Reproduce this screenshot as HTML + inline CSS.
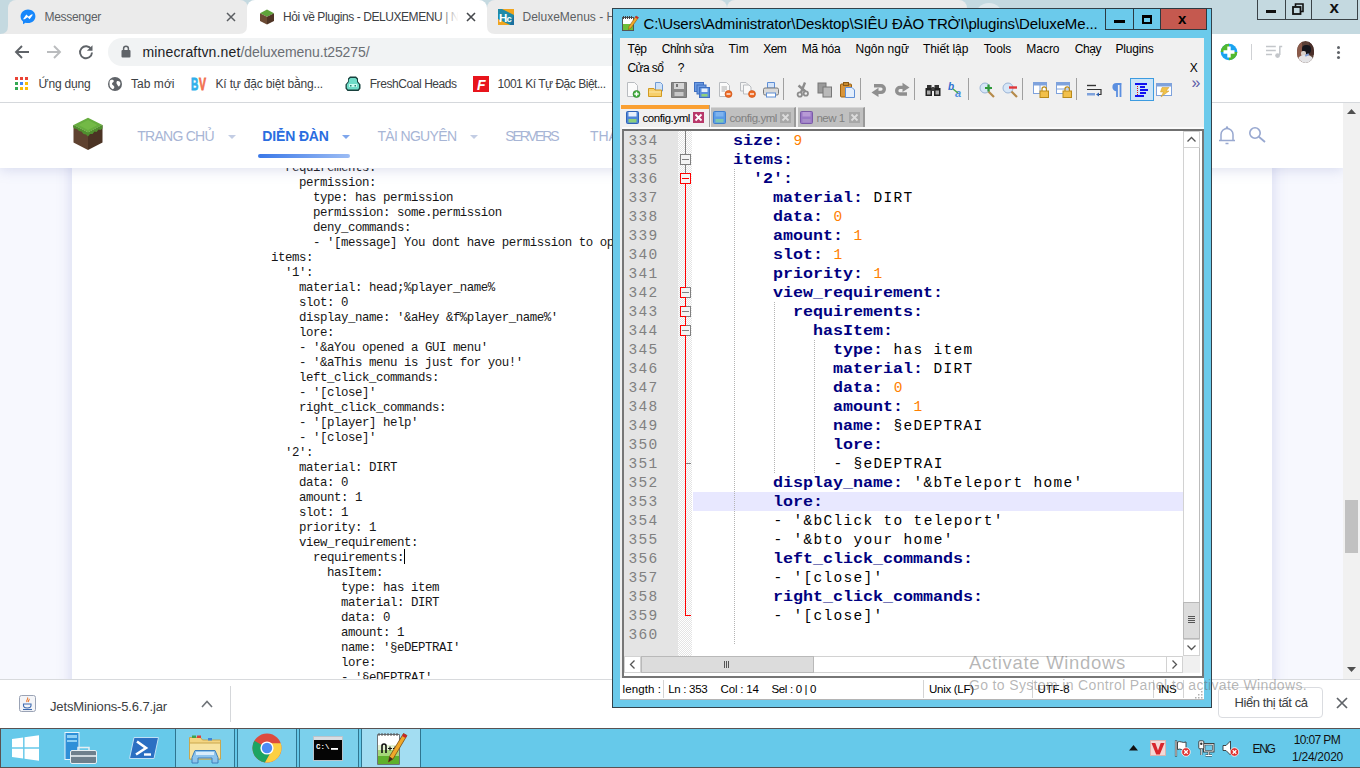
<!DOCTYPE html>
<html lang="vi"><head><meta charset="utf-8"><title>Hỏi về Plugins - DELUXEMENU</title>
<style>
*{box-sizing:border-box;margin:0;padding:0}
html,body{width:1360px;height:768px;overflow:hidden;background:#fff;font-family:"Liberation Sans",sans-serif}
#root{position:relative;width:1360px;height:768px;overflow:hidden}
#root div,#root span,#root svg,#root pre,#root i{position:absolute;display:block}
.t{white-space:pre}
/* chrome */
#tabstrip{left:0;top:0;width:1360px;height:34px;background:#c4d9e0}
.tab{top:0;height:34px;border-radius:8px 8px 0 0;background:#ebebeb}
#toolbar{left:0;top:34px;width:1360px;height:36px;background:#fff}
#bookmarks{left:0;top:70px;width:1360px;height:32px;background:#fff}
#bmline{left:0;top:102px;width:1360px;height:1px;background:#d5d8dc}
/* page */
#page{left:0;top:103px;width:1343px;height:577px;background:#f7f8fe;overflow:hidden}
#card{left:72px;top:0;width:1200px;height:600px;background:#fff;box-shadow:0 0 14px rgba(120,130,200,.28)}
#nav{left:0;top:0;width:1343px;height:65px;background:#fff;box-shadow:0 2px 12px rgba(120,130,190,.25)}
#code{left:257px;top:57.5px;font-family:"Liberation Mono",monospace;font-size:12.4px;letter-spacing:-0.44px;line-height:15px;color:#161616;white-space:pre}
#vscroll{left:1343px;top:103px;width:17px;height:577px;background:#f1f1f1}
/* download bar */
#dl{left:0;top:679px;width:1360px;height:49px;background:#fff;border-top:1px solid #d8dadd}
/* taskbar */
#taskbar{left:0;top:728px;width:1360px;height:40px;background:#66c9ea;box-shadow:inset 0 1px 0 #5a5252,inset 1px 0 0 #5a5252,inset 0 -1px 0 #5a5252}
.tb{top:1px;height:38px;background:#7bd0ec;border-left:1px solid #2f7590;border-right:1px solid #2f7590}
/* npp */
#npp{left:612px;top:8px;width:600px;height:700px;background:#6bcaeb;box-shadow:inset 0 0 0 1px #33424b}
#cl{left:8px;top:30px;width:584px;height:662px;background:#f0f0f0}
#tbar{left:0;top:44px;width:584px;height:16px}
#root svg.ic{top:0;width:16px;height:16px}
#root svg.fl{width:13px;height:13px}
#root i.sep{top:-4px;width:1px;height:22px;background:#a0a0a0}
#edf{left:2px;top:91px;width:582px;height:549px;background:#fff;border:2px solid #767676;border-top-color:#707070;box-shadow:0 -2px 0 #fbfbfb}
#ed{left:12px;top:123px;width:576px;height:542px;overflow:hidden;background:#fff}
#lnm{left:0;top:0;width:54px;height:525px;background:#e4e4e4}
#fdm{left:54px;top:0;width:14px;height:525px;background:#f2f2f2 conic-gradient(#fff 25%,#e4e4e4 0 50%,#fff 0 75%,#e4e4e4 0) 0 0/2px 2px}
#cur{left:69px;top:361px;width:490px;height:19px;background:#e8e8ff}
#lnum,#src{top:1px;font-family:"Liberation Mono",monospace;font-size:14.5px;letter-spacing:1.3px;line-height:19px;white-space:pre}
#lnum{left:4.6px;color:#808080}
#src{left:69.6px;color:#000}
#src b{color:#000080;font-weight:700;display:inline-block;font-size:16.667px;letter-spacing:0;line-height:12px;transform:scaleY(.86);transform-origin:0 10.5px;margin-left:-.6px;margin-right:.6px}
#src .n{position:static!important;display:inline!important;color:#ff8000}
#root .ig{width:1px;background:repeating-linear-gradient(180deg,#b4b4b4 0 1px,transparent 1px 2px)}
#sb{left:8px;top:670px;width:584px;height:22px;background:#fff;border-bottom:1px solid #b4b4b4}
#root i.ss{top:2px;width:1px;height:18px;background:#d4d4d4}
</style></head><body><div id="root">
<div id="tabstrip">
 <div class="tab" style="left:8px;width:240px"></div>
 <div class="tab" style="left:487px;width:240px"></div>
 <div class="tab" style="left:727px;width:240px"></div>
 <div style="left:975px;top:3px;width:28px;height:28px;border-radius:14px;background:#dfe8ec"></div>
 <div class="tab" style="left:247px;width:240px;background:#fff"></div>
 <!-- tab flares -->
 <svg style="left:0;top:26px" width="500" height="8" viewBox="0 0 500 8"><path d="M0 8 Q8 8 8 0 V8Z" fill="#ebebeb"/><path d="M239 8 H247 V0 Q247 8 239 8Z M495 8 H487 V0 Q487 8 495 8Z" fill="#fff"/></svg>
 <!-- messenger icon -->
 <svg style="left:20px;top:9px" width="16" height="16" viewBox="0 0 16 16"><path d="M8 .5C3.8.5.6 3.5.6 7.4c0 2.1.9 3.900 2.400 5.100v2.700l2.500-1.400c.8.200 1.600.300 2.500.300 4.200 0 7.400-3 7.400-6.900S12.200.5 8 .5z" fill="#1787fb"/><path d="M3 10.200l3.300-4.600 2.200 1.900 2.800-1.900 1.700 0-3.300 4.600-2.200-1.900-2.800 1.900z" fill="#fff"/></svg>
 <span class="t" style="left:44.5px;top:10.84px;font-size:12px;line-height:12px;color:#5c5f63;letter-spacing:-0.319px;">Messenger</span>
 <svg style="left:226px;top:12px" width="10" height="10" viewBox="0 0 10 10"><path d="M1 1L9 9M9 1L1 9" stroke="#5a5d61" stroke-width="1.500" fill="none"/></svg>
 <!-- active tab: grass block favicon -->
 <svg style="left:259px;top:9px" width="16" height="16" viewBox="0 0 16 16"><path d="M8 .6L15 4.200 8 7.800 1 4.200z" fill="#5fa33a"/><path d="M1 4.200L8 7.800V15.600L1 12z" fill="#6b4a33"/><path d="M15 4.200L8 7.800V15.600L15 12z" fill="#4f3525"/></svg>
 <span class="t" style="left:283px;top:10.84px;font-size:12px;line-height:12px;color:#3c4043;letter-spacing:-0.425px;">Hỏi về Plugins - DELUXEMENU | N</span>
 <div style="left:438px;top:6px;width:24px;height:22px;background:linear-gradient(90deg,rgba(255,255,255,0),#fff 85%)"></div>
 <svg style="left:466px;top:12px" width="10" height="10" viewBox="0 0 10 10"><path d="M1 1L9 9M9 1L1 9" stroke="#45484c" stroke-width="1.600" fill="none"/></svg>
 <!-- tab 3 -->
 <svg style="left:498px;top:9px" width="16" height="16" viewBox="0 0 16 16"><rect width="16" height="16" fill="#1e8aa8"/><path d="M4 0H16V6z M0 10V16H12z" fill="#f0a51e"/><path d="M16 6V16H12z" fill="#1b6f9e"/><text x="1" y="12.500" font-family="Liberation Sans,sans-serif" font-weight="700" font-size="11.500" fill="#fff">H</text><text x="8.500" y="13" font-family="Liberation Sans,sans-serif" font-weight="700" font-size="9.500" fill="#fff">c</text></svg>
 <span class="t" style="left:522.5px;top:10.84px;font-size:12px;line-height:12px;color:#5c5f63;">DeluxeMenus - H</span>
 <!-- window controls -->
 <div style="left:1257px;top:-1px;width:101px;height:21px;border:1px solid #3b4348;background:#c4d9e0"></div>
 <div style="left:1285px;top:0;width:1px;height:19px;background:#3b4348"></div>
 <div style="left:1311px;top:0;width:1px;height:19px;background:#3b4348"></div>
 <div style="left:1266px;top:10px;width:10px;height:3px;background:#111"></div>
 <svg style="left:1292px;top:3px" width="12" height="12" viewBox="0 0 12 12"><path d="M3.500 3.500V1H11V8.500H8.500" fill="none" stroke="#111" stroke-width="1.600"/><rect x="1" y="4" width="7.500" height="7" fill="none" stroke="#111" stroke-width="1.800"/></svg>
 <span class="t" style="left:1329.5px;top:-0.89px;font-size:17px;line-height:17px;color:#111;font-weight:700;">x</span>
</div>
<div id="toolbar">
 <svg style="left:14px;top:10px" width="16" height="16" viewBox="0 0 16 16"><path d="M15 8H2.500M8 2L2 8l6 6" fill="none" stroke="#5f6368" stroke-width="1.900"/></svg>
 <svg style="left:46px;top:10px" width="16" height="16" viewBox="0 0 16 16"><path d="M1 8H13.500M8 2l6 6-6 6" fill="none" stroke="#babcbe" stroke-width="1.900"/></svg>
 <svg style="left:78px;top:10px" width="16" height="16" viewBox="0 0 16 16"><path d="M13.200 5.200A6 6 0 1 0 14 8.500" fill="none" stroke="#5f6368" stroke-width="1.900"/><path d="M14.500 1.200V6.800H8.900z" fill="#5f6368"/></svg>
 <div style="left:108px;top:4px;width:1080px;height:28px;border-radius:14px;background:#f1f3f4"></div>
 <svg style="left:121px;top:11px" width="10" height="13" viewBox="0 0 10 13"><rect x=".5" y="5" width="9" height="7.500" rx="1" fill="#5f6368"/><path d="M2.600 5.500V3.600a2.400 2.400 0 0 1 4.800 0V5.500" fill="none" stroke="#5f6368" stroke-width="1.500"/></svg>
 <span class="t" style="left:142.5px;top:10.65px;font-size:14px;line-height:14px;color:#202124;letter-spacing:0.152px;">minecraftvn.net</span><span class="t" style="left:240.5px;top:10.65px;font-size:14px;line-height:14px;color:#6b6f74;letter-spacing:-0.093px;">/deluxemenu.t25275/</span>
 <!-- extension icons -->
 <svg style="left:1220px;top:9px" width="18" height="18" viewBox="0 0 18 18"><circle cx="9" cy="9" r="8.300" fill="#1aa3f0"/><path d="M9 .7A8.300 8.300 0 0 0 .7 9H9z M9 17.300A8.300 8.300 0 0 0 17.300 9H9z" fill="#52b82e"/><path d="M9 3.500V14.500M3.500 9H14.500" stroke="#fff" stroke-width="3.400"/></svg>
 <div style="left:1251px;top:10px;width:1px;height:16px;background:#cfd1d4"></div>
 <svg style="left:1264px;top:10px" width="20" height="16" viewBox="0 0 20 16"><path d="M2 2.600H11.800M2 6.400H11.800M2 10.500H8" stroke="#c3c6ca" stroke-width="1.500"/><path d="M15.800 2.600V11M15.200 2.600H18.200" stroke="#c3c6ca" stroke-width="1.500" fill="none"/><circle cx="13.600" cy="11.600" r="2.400" fill="#c3c6ca"/></svg>
 <div style="left:1297px;top:7px;width:17px;height:22px;border-radius:8.500px/10px;overflow:hidden;background:#5a4036">
  <div style="left:0;top:0;width:5px;height:22px;background:#8a5a4a"></div>
  <div style="left:12px;top:0;width:5px;height:14px;background:#4a2f2a"></div>
  <div style="left:5px;top:4px;width:9px;height:9px;border-radius:4px;background:#14161c"></div>
  <div style="left:4px;top:10px;width:5px;height:5px;border-radius:2px;background:#d9d2cc"></div>
  <div style="left:0;top:14px;width:17px;height:10px;border-radius:7px 7px 0 0;background:#e4e4e6"></div>
  <div style="left:8px;top:13px;width:4px;height:2px;background:#7f9fd6;transform:rotate(-25deg)"></div>
 </div>
 <div style="left:1337px;top:12px;width:3px;height:3px;border-radius:2px;background:#5f6368;box-shadow:0 5px 0 #5f6368,0 10px 0 #5f6368"></div>
</div>
<div id="bookmarks">
 <svg style="left:15px;top:7px" width="13" height="13" viewBox="0 0 13 13"><rect x="0" y="0" width="3" height="3" fill="#ea4335"/><rect x="5" y="0" width="3" height="3" fill="#ea4335"/><rect x="10" y="0" width="3" height="3" fill="#ea4335"/><rect x="0" y="5" width="3" height="3" fill="#34a853"/><rect x="5" y="5" width="3" height="3" fill="#4285f4"/><rect x="10" y="5" width="3" height="3" fill="#fbbc05"/><rect x="0" y="10" width="3" height="3" fill="#34a853"/><rect x="5" y="10" width="3" height="3" fill="#fbbc05"/><rect x="10" y="10" width="3" height="3" fill="#fbbc05"/></svg>
 <span class="t" style="left:38.5px;top:7.84px;font-size:12px;line-height:12px;color:#3c4043;letter-spacing:-0.203px;">Ứng dụng</span>
 <svg style="left:108px;top:7px" width="14" height="14" viewBox="0 0 14 14"><circle cx="7" cy="7" r="7" fill="#5f6368"/><path d="M2.200 3.200C4 2.200 6 2.800 5.800 4.200S3.800 5.500 4 7 6 8.200 6.300 9.800 5.200 12 4.600 12.300C2.600 11.300 1.500 9.300 1.500 7S1.700 4 2.200 3.200z M9.300 4c1.300-.4 2.700.4 3 1.800S12 8.500 11.200 9.300 9.800 8 9 7.200 8.300 4.400 9.300 4z" fill="#fff"/></svg>
 <span class="t" style="left:131px;top:7.84px;font-size:12px;line-height:12px;color:#3c4043;letter-spacing:0.040px;">Tab mới</span>
 <span class="t" style="left:190.500px;top:5.600px;font-size:17px;line-height:17px;font-weight:700;color:#2fb0ea;-webkit-text-stroke:.8px #2fb0ea;transform:scaleX(.6);transform-origin:0 0">B</span><span class="t" style="left:198.500px;top:5.600px;font-size:17px;line-height:17px;font-weight:700;color:#f2704f;-webkit-text-stroke:.8px #f2704f;transform:scaleX(.62);transform-origin:0 0">V</span>
 <span class="t" style="left:215.5px;top:7.84px;font-size:12px;line-height:12px;color:#3c4043;letter-spacing:-0.179px;">Kí tự đặc biệt bằng...</span>
 <svg style="left:345px;top:6px" width="16" height="16" viewBox="0 0 16 16"><path d="M5 .5h6l2 2v3l2.500 3v4l-2 2.500H2.500L.5 12.500v-4L3 5.500v-3z" fill="#17403c"/><path d="M5.500 2h5l1.500 1.500v2.500l2 2.500v3.500L13 13.500H3L1.800 12V8.500l2-2.500V3.500z" fill="#6fdcc8"/><path d="M4 8h8v3H4z" fill="#c9fbf0"/><path d="M5 9h1.500v1.500H5z M9.500 9H11v1.500H9.500z" fill="#2b7f73"/></svg>
 <span class="t" style="left:369.7px;top:7.84px;font-size:12px;line-height:12px;color:#3c4043;letter-spacing:-0.425px;">FreshCoal Heads</span>
 <div style="left:473px;top:6px;width:16px;height:16px;background:#e8141c"></div>
 <span class="t" style="left:477px;top:7.65px;font-size:14px;line-height:14px;color:#fff;font-weight:700;"><i style="position:static;display:inline">F</i></span>
 <span class="t" style="left:497.5px;top:7.84px;font-size:12px;line-height:12px;color:#3c4043;letter-spacing:-0.479px;">1001 Kí Tự Đặc Biệt...</span>
</div>
<div id="bmline"></div>
<div id="page">
 <div id="card"></div>
 <pre id="code">    requirements:
      permission:
        type: has permission
        permission: some.permission
        deny_commands:
        - '[message] You dont have permission to open this menu'
  items:
    '1':
      material: head;%player_name%
      slot: 0
      display_name: '&amp;aHey &amp;f%player_name%'
      lore:
      - '&amp;aYou opened a GUI menu'
      - '&amp;aThis menu is just for you!'
      left_click_commands:
      - '[close]'
      right_click_commands:
      - '[player] help'
      - '[close]'
    '2':
      material: DIRT
      data: 0
      amount: 1
      slot: 1
      priority: 1
      view_requirement:
        requirements:
          hasItem:
            type: has item
            material: DIRT
            data: 0
            amount: 1
            name: '§eDEPTRAI'
            lore:
            - '§eDEPTRAI'
            display_name: '&amp;bTeleport home'</pre>
 <div style="left:404px;top:446px;width:1px;height:15px;background:#000"></div>
 <div id="nav">
  <svg style="left:72px;top:13.500px" width="32" height="34" viewBox="0 0 32 34"><path d="M1.500 8L16 15.500V33L1.500 25.500z" fill="#5f4230"/><path d="M30.500 8L16 15.500V33L30.500 25.500z" fill="#4b3324"/><path d="M1.500 8L16 15.500 30.500 8V11.500l-2 1.500-2-.5-2 2.500-2-.5-2 2.500-2.500 0-2 2.500-2-2-2.500-.5-2-2.500-2.500-.500-2-2-2.500-.5-1.500-1.500z" fill="#4f8f2e"/><path d="M16 .8L30.500 8 16 15.500 1.500 8z" fill="#66ad3e"/><path d="M16 3l9.500 5-9.500 5-9.500-5z" fill="#7cc24d" opacity=".6"/></svg>
  <span class="t" style="left:137.3px;top:25.55px;font-size:14px;line-height:14px;color:#a7b5d5;letter-spacing:-0.748px;">TRANG CHỦ</span>
  <svg style="left:228px;top:32px" width="8" height="4" viewBox="0 0 8 4"><path d="M0 0H8L4 4z" fill="#c3cde4"/></svg>
  <span class="t" style="left:262.3px;top:25.55px;font-size:14px;line-height:14px;color:#2a6de0;font-weight:700;letter-spacing:-0.146px;">DIỄN ĐÀN</span>
  <svg style="left:342px;top:32px" width="8" height="4" viewBox="0 0 8 4"><path d="M0 0H8L4 4z" fill="#7ea6ec"/></svg>
  <div style="left:258px;top:51px;width:92px;height:4px;border-radius:2px;background:linear-gradient(90deg,#3a78e8,#9cbcf4)"></div>
  <span class="t" style="left:377.4px;top:25.55px;font-size:14px;line-height:14px;color:#a7b5d5;letter-spacing:-0.658px;">TÀI NGUYÊN</span>
  <svg style="left:470px;top:32px" width="8" height="4" viewBox="0 0 8 4"><path d="M0 0H8L4 4z" fill="#c3cde4"/></svg>
  <span class="t" style="left:505.3px;top:25.55px;font-size:14px;line-height:14px;color:#a7b5d5;letter-spacing:-2.067px;">SERVERS</span>
  <span class="t" style="left:589.9px;top:25.55px;font-size:14px;line-height:14px;color:#a7b5d5;">THÀNH VIÊN</span>
  <svg style="left:1218px;top:22px" width="18" height="20" viewBox="0 0 18 20"><path d="M3 15V9.500a6 6 0 0 1 12 0V15M1 15.500H17" fill="none" stroke="#98a8d0" stroke-width="1.500"/><circle cx="9" cy="2.500" r="1.200" fill="#98a8d0"/><path d="M7.500 18.500h3" stroke="#98a8d0" stroke-width="1.500"/></svg>
  <svg style="left:1248px;top:23px" width="18" height="18" viewBox="0 0 18 18"><circle cx="7" cy="7" r="5.200" fill="none" stroke="#98a8d0" stroke-width="1.600"/><path d="M10.800 10.800L17 16" stroke="#98a8d0" stroke-width="1.800"/></svg>
 </div>
</div>
<div id="vscroll">
 <svg style="left:4px;top:6px" width="9" height="5" viewBox="0 0 9 5"><path d="M0 5H9L4.500 0z" fill="#505050"/></svg>
 <svg style="left:4px;top:564px" width="9" height="5" viewBox="0 0 9 5"><path d="M0 0H9L4.500 5z" fill="#505050"/></svg>
 <div style="left:2px;top:397px;width:13px;height:53px;background:#c1c1c1"></div>
</div>
<div id="dl">
 <svg style="left:19px;top:15px" width="17" height="17" viewBox="0 0 17 17"><rect x=".5" y=".5" width="16" height="16" rx="2" fill="#f4f5f8" stroke="#9aa3b5"/><path d="M8.500 2.500c1.500 1.500-2 2.500-.5 4.500M10 4c1 1-1.500 1.800-.5 3" fill="none" stroke="#e8762c" stroke-width="1.100"/><path d="M4.500 9h7.500v1.500c0 1.500-1.500 2.500-3.700 2.500S4.500 12 4.500 10.500z" fill="none" stroke="#3d6ab0" stroke-width="1.100"/><path d="M4 14.500h9" stroke="#3d6ab0" stroke-width="1.100"/></svg>
 <span class="t" style="left:50px;top:19.70px;font-size:13px;line-height:13px;color:#3c4043;letter-spacing:-0.141px;">JetsMinions-5.6.7.jar</span>
 <svg style="left:201px;top:20px" width="12" height="8" viewBox="0 0 12 8"><path d="M1 7L6 1.500 11 7" fill="none" stroke="#6f7378" stroke-width="1.600"/></svg>
 <div style="left:230px;top:6px;width:1px;height:36px;background:#d5d7da"></div>
 <div style="left:1218px;top:7px;width:105px;height:31px;border:1px solid #dadce0;border-radius:4px;background:#fff"></div>
 <span class="t" style="left:1234.6px;top:16.30px;font-size:13px;line-height:13px;color:#3c4043;letter-spacing:-0.433px;">Hiển thị tất cả</span>
 <svg style="left:1336px;top:17px" width="12" height="12" viewBox="0 0 12 12"><path d="M1 1L11 11M11 1L1 11" stroke="#5f6368" stroke-width="1.700" fill="none"/></svg>
</div>
<div id="taskbar">
 <!-- start -->
 <svg style="left:11.500px;top:6.500px" width="27" height="26" viewBox="0 0 28 28" preserveAspectRatio="none"><path d="M0 4.200L11.500 2.600V13.300H0z M13 2.400L28 .3V13.300H13z M0 14.700H11.500V25.400L0 23.800z M13 14.700H28V27.700L13 25.600z" fill="#fff"/></svg>
 <!-- server manager -->
 <svg style="left:64px;top:4px" width="34" height="32" viewBox="0 0 34 32"><rect x="1" y=".5" width="14" height="27" fill="#2f8fd8" stroke="#e8f4fb" stroke-width="1"/><rect x="3" y="3" width="10" height="3" fill="#8fd0f5"/><rect x="3" y="8" width="10" height="2" fill="#8fd0f5"/><rect x="6.500" y="18.500" width="26" height="13" rx="1.500" fill="#6e7f8c" stroke="#e6eef2" stroke-width="1"/><path d="M14 18.500v-3h11v3" fill="none" stroke="#e6eef2" stroke-width="1.500"/><rect x="7" y="23" width="25" height="2" fill="#cfd8de"/></svg>
 <!-- powershell -->
 <svg style="left:129px;top:9px" width="30" height="22" viewBox="0 0 30 22"><path d="M5 .5H29.500L25 21.500H.5z" fill="#2b6fc2" stroke="#bfe0f5" stroke-width="1"/><path d="M8 4.500L17 11 7 17.500" fill="none" stroke="#fff" stroke-width="2.600"/><path d="M15 17.500h7" stroke="#fff" stroke-width="2.400"/></svg>
 <!-- running buttons -->
 <div class="tb" style="left:175px;width:60px"></div>
 <div class="tb" style="left:237px;width:60px"></div>
 <div class="tb" style="left:299px;width:60px"></div>
 <div class="tb" style="left:361px;width:60px;background:#a3ddf2"></div>
 <!-- explorer -->
 <svg style="left:188px;top:5px" width="34" height="31" viewBox="0 0 34 31"><path d="M1.500 4.500h11l2 2.500H32.500V26H1.500z" fill="#f3d582" stroke="#c9a74e" stroke-width="1"/><rect x="4" y="2.500" width="4" height="2.500" fill="#3fa34a"/><rect x="9" y="2.500" width="4" height="2.500" fill="#d9433a"/><rect x="20" y="5" width="4" height="2.500" fill="#3e86d6"/><path d="M1.500 10H32.500V26H1.500z" fill="#f7e3a1" stroke="#c9a74e" stroke-width="1"/><path d="M7 17.500h20l3 7v5.500H24v-5H10v5H4v-5.500z" fill="#8fc4ec" stroke="#3d80bd" stroke-width="1"/><rect x="8" y="19" width="18" height="3" fill="#d9edfb"/></svg>
 <!-- chrome -->
 <svg style="left:252px;top:5px" width="30" height="30" viewBox="0 0 30 30"><circle cx="15" cy="15" r="14.500" fill="#dd4b3e"/><path d="M15 15L2.400 7.800A14.500 14.500 0 0 0 13 29.400L19.500 18z" fill="#1da462"/><path d="M15 15L19.500 18 13 29.400A14.500 14.500 0 0 0 28.700 10.200H15z" fill="#fcd043"/><circle cx="15" cy="15" r="6.600" fill="#fff"/><circle cx="15" cy="15" r="5.200" fill="#4c8bf5"/></svg>
 <!-- cmd -->
 <svg style="left:313px;top:8px" width="30" height="25" viewBox="0 0 30 25"><rect x=".5" y=".5" width="29" height="24" fill="#050505" stroke="#b9c4cc" stroke-width="1"/><rect x="1" y="1" width="28" height="3" fill="#d8dde2"/><text x="3" y="13" font-family="Liberation Mono,monospace" font-weight="700" font-size="7.500" fill="#fff">C:\</text><rect x="18" y="12" width="7" height="1.800" fill="#fff"/></svg>
 <!-- npp -->
 <svg style="left:376px;top:3px" width="32" height="35" viewBox="0 0 32 35"><path d="M1.500 3.500H23.500V33.500H1.500z" fill="#fff" stroke="#6d7378" stroke-width="1"/><path d="M2 14H23V33H2z" fill="#e3f2d3"/><path d="M2 19H23V33H2z" fill="#a6d77a"/><path d="M2 25H23V33H2z" fill="#5fb02c"/><path d="M3 2v3M6 2v3M9 2v3M12 2v3M15 2v3M18 2v3M21 2v3" stroke="#555" stroke-width="1"/><path d="M6 22v-7a2 2 0 0 1 4 0v7" fill="none" stroke="#111" stroke-width="1.600"/><path d="M12 17.500h4M14 15.500v4M17 17.500h4M19 15.500v4" stroke="#111" stroke-width="1.200"/><path d="M27.500 2.500l3.500 2L17 28l-4.500 3 1-5.500z" fill="#f0a829" stroke="#7a4b12" stroke-width=".8"/><path d="M27.500 2.500l3.500 2-1.500 2.500-3.500-2z" fill="#c6262c"/><path d="M12.500 31l1-5.500 3.500 2.500z" fill="#3a2a1a"/></svg>
 <!-- tray -->
 <svg style="left:1129px;top:17px" width="9" height="6" viewBox="0 0 9 6"><path d="M0 5.500H9L4.500 0z" fill="#111"/></svg>
 <svg style="left:1150px;top:12px" width="16" height="16" viewBox="0 0 16 16"><rect x=".5" y=".5" width="15" height="15" fill="#f3d9d6" stroke="#d9b4b0"/><path d="M1.500 3h3.800L8 10.500 10.700 3h3.800L9.800 14.500H6.200z" fill="#d8262b"/></svg>
 <svg style="left:1174px;top:12px" width="17" height="17" viewBox="0 0 17 17"><path d="M2 .5V16.500" stroke="#333" stroke-width="2.200"/><path d="M2 1V16" stroke="#fff" stroke-width="1"/><path d="M3.500 2c3-1.500 5 1.500 8.500 0v7.500c-3.500 1.500-5.500-1.500-8.500 0z" fill="#fff" stroke="#333" stroke-width=".9"/><circle cx="12" cy="12" r="4.300" fill="#e0312f" stroke="#fff" stroke-width=".8"/><path d="M10.200 10.200l3.600 3.600M13.800 10.200l-3.600 3.600" stroke="#fff" stroke-width="1.300"/></svg>
 <svg style="left:1198px;top:12px" width="17" height="17" viewBox="0 0 17 17"><rect x="5.500" y="3.500" width="10.500" height="8.500" fill="#fff" stroke="#333" stroke-width=".9"/><rect x="7" y="5" width="7.500" height="5.500" fill="#6bcaeb" stroke="#333" stroke-width=".6"/><path d="M7.500 15.500h6.500M10.800 12v3.500" stroke="#333" stroke-width="2.200"/><path d="M7.500 15.500h6.500M10.800 12v3.500" stroke="#fff" stroke-width="1"/><rect x=".8" y=".8" width="5" height="8" rx="1" fill="#fff" stroke="#333" stroke-width=".9"/><path d="M3.300 9v6" stroke="#333" stroke-width="2"/><path d="M3.300 9v6" stroke="#fff" stroke-width=".9"/><circle cx="3.300" cy="3.800" r="1.200" fill="#333"/></svg>
 <svg style="left:1222px;top:12px" width="18" height="17" viewBox="0 0 18 17"><path d="M1 5.500h3L8.500 1V15L4 10.500H1z" fill="#fff" stroke="#333" stroke-width=".9"/><circle cx="12.500" cy="12" r="4.300" fill="#e0312f" stroke="#fff" stroke-width=".8"/><path d="M10.700 10.200l3.600 3.600M14.300 10.200l-3.600 3.600" stroke="#fff" stroke-width="1.300"/></svg>
 <span class="t" style="left:1252.5px;top:14.84px;font-size:12px;line-height:12px;color:#111;letter-spacing:-1.339px;">ENG</span>
 <span class="t" style="left:1293.8px;top:6.44px;font-size:12px;line-height:12px;color:#111;letter-spacing:-0.647px;">10:07 PM</span>
 <span class="t" style="left:1292px;top:23.34px;font-size:12px;line-height:12px;color:#111;letter-spacing:-0.266px;">1/24/2020</span>
</div>
<div id="npp">
<!-- title bar -->
<svg style="left:10px;top:7px" width="17" height="16" viewBox="0 0 17 16"><rect x=".5" y="2.500" width="11" height="13" fill="#fff" stroke="#555"/><path d="M1 9H11V15H1z" fill="#6cbf3a"/><path d="M1.500 1v3M3.500 1v3M5.500 1v3M7.500 1v3M9.500 1v3" stroke="#444" stroke-width="1"/><path d="M14 1l2.500 1.500L9 13l-2.500 1.500.5-3z" fill="#f0a829" stroke="#8a5a16" stroke-width=".6"/><path d="M14 1l2.500 1.500-1 1.500L13 2.500z" fill="#c6262c"/></svg>
<span class="t" style="left:31.5px;top:7.60px;font-size:15px;line-height:15px;color:#000;letter-spacing:-0.136px;">C:\Users\Administrator\Desktop\SIÊU ĐẢO TRỜI\plugins\DeluxeMe...</span>
<div style="left:493px;top:0;width:102px;height:22px;border:1px solid #2b3a42"></div>
<div style="left:549px;top:1px;width:45px;height:20px;background:#c5594f"></div>
<div style="left:521px;top:1px;width:1px;height:20px;background:#2b3a42"></div>
<div style="left:548px;top:1px;width:1px;height:20px;background:#2b3a42"></div>
<div style="left:502px;top:12px;width:11px;height:3px;background:#000"></div>
<div style="left:530px;top:7px;width:10px;height:9px;border:2px solid #000;border-top-width:3px"></div>
<span class="t" style="left:566px;top:2.80px;font-size:15px;line-height:15px;color:#000;font-weight:700;">x</span>
<!-- client -->
<div id="cl">
 <span class="t" style="left:7.5px;top:5.34px;font-size:12px;line-height:12px;color:#000;letter-spacing:-0.663px;">Tệp</span><span class="t" style="left:41.7px;top:5.34px;font-size:12px;line-height:12px;color:#000;letter-spacing:-0.401px;">Chỉnh sửa</span><span class="t" style="left:108.5px;top:5.34px;font-size:12px;line-height:12px;color:#000;letter-spacing:-0.224px;">Tìm</span><span class="t" style="left:143.2px;top:5.34px;font-size:12px;line-height:12px;color:#000;letter-spacing:-0.496px;">Xem</span><span class="t" style="left:181.8px;top:5.34px;font-size:12px;line-height:12px;color:#000;letter-spacing:-0.222px;">Mã hóa</span><span class="t" style="left:235.5px;top:5.34px;font-size:12px;line-height:12px;color:#000;letter-spacing:0.012px;">Ngôn ngữ</span><span class="t" style="left:303px;top:5.34px;font-size:12px;line-height:12px;color:#000;letter-spacing:-0.081px;">Thiết lập</span><span class="t" style="left:363.7px;top:5.34px;font-size:12px;line-height:12px;color:#000;letter-spacing:-0.083px;">Tools</span><span class="t" style="left:406.3px;top:5.34px;font-size:12px;line-height:12px;color:#000;letter-spacing:-0.029px;">Macro</span><span class="t" style="left:454.7px;top:5.34px;font-size:12px;line-height:12px;color:#000;letter-spacing:-0.379px;">Chạy</span><span class="t" style="left:495.5px;top:5.34px;font-size:12px;line-height:12px;color:#000;letter-spacing:-0.166px;">Plugins</span>
 <span class="t" style="left:7.5px;top:24.14px;font-size:12px;line-height:12px;color:#000;letter-spacing:-0.615px;">Cửa sổ</span><span class="t" style="left:57.8px;top:24.14px;font-size:12px;line-height:12px;color:#000;">?</span><span class="t" style="left:569.7px;top:24.14px;font-size:12px;line-height:12px;color:#000;">X</span>
 <!-- toolbar icons (y=44, 16px) -->
 <div id="tbar">
  <!-- new -->
  <svg class="ic" style="left:5px"><path d="M2.500 .5H9.500L12.500 3.500V14.500H2.500z" fill="#fbfbfb" stroke="#b9bcc0"/><circle cx="11.500" cy="12" r="3.500" fill="#3fae3a" stroke="#2a7d27" stroke-width=".6"/><path d="M11.500 9.800v4.400M9.300 12h4.400" stroke="#fff" stroke-width="1.400"/></svg>
  <!-- open -->
  <svg class="ic" style="left:28px"><path d="M7.500 .5H12.500L14.500 2.500V9H7.500z" fill="#cfe2f8" stroke="#6f9bd6"/><path d="M.5 6.500H6L7 8H13.500V14.500H.5z" fill="#f7cf6a" stroke="#d19a22"/><path d="M1 10H13" stroke="#fbe6a6"/></svg>
  <!-- save -->
  <svg class="ic" style="left:51px"><path d="M.5 .5H15.500V15.500H.5z" fill="#8a8a8a" stroke="#777"/><rect x="3" y="1" width="10" height="6" fill="#d6d6d6"/><rect x="3.500" y="10" width="9" height="4" fill="#c9c9c9"/><rect x="5" y="2" width="2" height="3" fill="#777"/></svg>
  <!-- save all -->
  <svg class="ic" style="left:74px"><rect x=".5" y=".5" width="9" height="9" fill="#6b9be2" stroke="#3f6fc0"/><rect x="3" y="3" width="9" height="9" fill="#6b9be2" stroke="#3f6fc0"/><rect x="5.500" y="5.500" width="10" height="10" fill="#5b90de" stroke="#3f6fc0"/><rect x="7.500" y="6.500" width="6" height="3.500" fill="#e6eef9"/><rect x="7.500" y="12" width="6" height="2.500" fill="#8fd07a"/></svg>
  <!-- close -->
  <svg class="ic" style="left:97px"><path d="M2.500 .5H9.500L12.500 3.500V14.500H2.500z" fill="#fbfbfb" stroke="#b9bcc0"/><path d="M4.500 5H10M4.500 7H10M4.500 9H8" stroke="#aaa"/><circle cx="11.500" cy="12" r="3.500" fill="#ee6a24" stroke="#c34e10" stroke-width=".6"/><path d="M9.500 12h4" stroke="#fff" stroke-width="1.300"/></svg>
  <!-- close all -->
  <svg class="ic" style="left:120px"><path d="M.5 .5H6L8 2.500V9H.5z" fill="#f4f4f4" stroke="#b9bcc0"/><path d="M3.500 3H9L11 5V12H3.500z" fill="#f9f9f9" stroke="#b9bcc0"/><circle cx="12" cy="12" r="3.500" fill="#ee6a24" stroke="#c34e10" stroke-width=".6"/><path d="M10 12h4" stroke="#fff" stroke-width="1.300"/></svg>
  <!-- print -->
  <svg class="ic" style="left:143px"><path d="M4.500 .5H11.500V6H4.500z" fill="#d4e4fa" stroke="#5f8fd6"/><rect x=".5" y="6" width="15" height="7" rx="1.500" fill="#d9d9d9" stroke="#7b7b7b"/><rect x="3.500" y="11" width="9" height="4" fill="#fff" stroke="#5f8fd6"/></svg>
  <i class="sep" style="left:163px"></i>
  <!-- cut -->
  <svg class="ic" style="left:175px"><path d="M10 .5L6 10.500M3.500 3.500L10.500 9.500" stroke="#8c8c8c" stroke-width="2.400"/><circle cx="4.800" cy="12.500" r="2.200" fill="none" stroke="#8c8c8c" stroke-width="1.800"/><circle cx="10.800" cy="11.500" r="2.200" fill="none" stroke="#8c8c8c" stroke-width="1.800"/></svg>
  <!-- copy -->
  <svg class="ic" style="left:197px"><rect x="1" y="1" width="8" height="10" fill="#9a9a9a" stroke="#777"/><rect x="6" y="5" width="8.500" height="10" fill="#b9b9b9" stroke="#777"/></svg>
  <!-- paste -->
  <svg class="ic" style="left:220px"><rect x=".5" y="2" width="11" height="13" rx="1" fill="#d9953a" stroke="#9b6212"/><rect x="3.500" y=".5" width="5" height="3" fill="#c98a2e" stroke="#8a5a16"/><path d="M5.500 5.500H12L14.500 8V15.500H5.500z" fill="#e3eefc" stroke="#5f8fd6"/></svg>
  <i class="sep" style="left:240px"></i>
  <!-- undo -->
  <svg class="ic" style="left:251px"><path d="M3 3.800H10a3.300 3.300 0 0 1 0 6.600H7" fill="none" stroke="#8f8f8f" stroke-width="3.400"/><path d="M.5 10.400L7.500 5.800V15z" fill="#8f8f8f"/></svg>
  <!-- redo -->
  <svg class="ic" style="left:274px"><path d="M13 12H6a3.300 3.300 0 0 1 0-6.600H9" fill="none" stroke="#8f8f8f" stroke-width="3.400"/><path d="M15.500 5.400L8.500 .8V10z" fill="#8f8f8f"/></svg>
  <i class="sep" style="left:294px"></i>
  <!-- find -->
  <svg class="ic" style="left:305px"><path d="M2 3H6.500V6H2z M9.500 3H14V6H9.500z" fill="#333"/><path d="M.5 6H7V14H.5z M9 6H15.500V14H9z" fill="#222"/><rect x="6.500" y="5" width="3" height="4" fill="#444"/><path d="M2 8.500H5.500V12.500H2z M10.500 8.500H14V12.500H10.500z" fill="#aaa"/></svg>
  <!-- replace -->
  <svg class="ic" style="left:328px"><text x="0" y="8" font-family="Liberation Sans,sans-serif" font-weight="700" font-style="italic" font-size="10" fill="#2d6fd0">b</text><text x="7" y="15" font-family="Liberation Sans,sans-serif" font-weight="700" font-style="italic" font-size="11" fill="#4f8fe0">a</text><path d="M5 7l5 4" stroke="#4aa84a" stroke-width="1.500"/></svg>
  <i class="sep" style="left:348px"></i>
  <!-- zoom in -->
  <svg class="ic" style="left:359px"><circle cx="6" cy="6" r="5" fill="#d6e6f7" stroke="#9ab4d6"/><path d="M9.500 9.500L15 15" stroke="#b58a4a" stroke-width="2.200"/><path d="M9.500 2.500v7M6 6h7" stroke="#2f9a3a" stroke-width="2.200"/></svg>
  <!-- zoom out -->
  <svg class="ic" style="left:382px"><circle cx="6" cy="6" r="5" fill="#d6e6f7" stroke="#9ab4d6"/><path d="M9.500 9.500L15 15" stroke="#b58a4a" stroke-width="2.200"/><path d="M7 5.500h8" stroke="#e0373a" stroke-width="2.400"/></svg>
  <i class="sep" style="left:402px"></i>
  <!-- sync v -->
  <svg class="ic" style="left:413px"><rect x=".5" y=".5" width="13" height="11" fill="#fff" stroke="#7ea2dc"/><rect x="1" y="1" width="12" height="2.500" fill="#7ea2dc"/><path d="M7 3V11" stroke="#7ea2dc"/><rect x="7" y="9" width="8.500" height="6.500" fill="#f2c04a" stroke="#b98a1a"/><path d="M9 9V7a2.200 2.200 0 0 1 4.400 0V9" fill="none" stroke="#b98a1a" stroke-width="1.200"/></svg>
  <!-- sync h -->
  <svg class="ic" style="left:436px"><rect x=".5" y=".5" width="13" height="11" fill="#fff" stroke="#7ea2dc"/><rect x="1" y="1" width="12" height="2.500" fill="#7ea2dc"/><path d="M1 7H13" stroke="#7ea2dc"/><rect x="7" y="9" width="8.500" height="6.500" fill="#f2c04a" stroke="#b98a1a"/><path d="M9 9V7a2.200 2.200 0 0 1 4.400 0V9" fill="none" stroke="#b98a1a" stroke-width="1.200"/></svg>
  <i class="sep" style="left:456px"></i>
  <!-- wrap -->
  <svg class="ic" style="left:466px"><path d="M1 3.500H10M1 7.500H15V12.500H11" fill="none" stroke="#333" stroke-width="1.200"/><path d="M1 3.500H10" stroke="#333" stroke-width="1.400"/><rect x="1" y="11" width="8" height="2.500" fill="#7ea2dc"/><path d="M13 10.500L10 12.500 13 14.500z" fill="#2d5fb0"/></svg>
  <!-- pilcrow -->
  <svg class="ic" style="left:490px"><path d="M7 15V2M10.500 15V2M11.500 2H6.500a3.200 3.200 0 0 0 0 6.400H7" fill="none" stroke="#5b8fe0" stroke-width="1.800"/><path d="M6.500 2a3.200 3.200 0 0 0 0 6.400H7V2z" fill="#5b8fe0"/></svg>
  <!-- indent guide (selected) -->
  <div style="left:510px;top:-4px;width:24px;height:23px;background:#cce4f7;border:1px solid #3c9be0"></div>
  <svg class="ic" style="left:514px" shape-rendering="crispEdges"><path d="M1 2H13M6 5H11M6 8H14M6 11H12M1 14H10" stroke="#1010f0" stroke-width="2"/><path d="M3.500 3.500V12.500" stroke="#e01414" stroke-width="1" stroke-dasharray="1 1"/><path d="M6.500 14v3" stroke="#1010f0" stroke-dasharray="1 1"/></svg>
  <!-- udl -->
  <svg class="ic" style="left:536px"><rect x=".5" y="1.500" width="15" height="12" fill="#fff" stroke="#7ea2dc"/><rect x="1" y="2" width="14" height="2.500" fill="#7ea2dc"/><path d="M6 5.500h7l-3 3.500h3l-8 6 2.500-5H4.500z" fill="#f0c24a" stroke="#c9962a" stroke-width=".5"/></svg>
  <span class="t" style="left:571.5px;top:-6.54px;font-size:16px;line-height:16px;color:#5c5ca8;">»</span>
 </div>
 <!-- tab bar -->
 <div style="left:1px;top:67px;width:89px;height:23px;background:#f0f0f0;border-right:1px solid #a0a0a0"></div>
 <div style="left:1px;top:67px;width:88px;height:4px;background:#faa032"></div>
 <div style="left:91px;top:69px;width:85px;height:21px;background:#c0c0c0;border-right:2px solid #9a9a9a;border-top:1px solid #d6d6d6"></div>
 <div style="left:178px;top:69px;width:67px;height:21px;background:#c0c0c0;border-right:2px solid #9a9a9a;border-top:1px solid #d6d6d6"></div>
 <svg class="fl" style="left:6px;top:73px"><rect x=".5" y=".5" width="12" height="12" rx="1" fill="#4f86d9" stroke="#2f62b8"/><rect x="2.500" y="1" width="8" height="4.500" fill="#e9f0fb"/><rect x="2.500" y="8" width="8" height="3.500" fill="#8fd07a"/></svg>
 <span class="t" style="left:22.5px;top:74.77px;font-size:11.5px;line-height:11.5px;color:#000;letter-spacing:-0.428px;">config.yml</span>
 <svg style="left:73px;top:74px" width="11" height="11" viewBox="0 0 11 11"><rect width="11" height="11" fill="#b8396a"/><path d="M2.500 2.500L8.500 8.500M8.500 2.500L2.500 8.500" stroke="#fff" stroke-width="1.800"/></svg>
 <svg class="fl" style="left:93px;top:73px"><rect x=".5" y=".5" width="12" height="12" rx="1" fill="#5b9be6" stroke="#3f7fd0"/><rect x="2.500" y="1" width="8" height="4.500" fill="#7fb3ee"/><rect x="2.500" y="8" width="8" height="3.500" fill="#7fc7b0"/></svg>
 <span class="t" style="left:109.5px;top:74.77px;font-size:11.5px;line-height:11.5px;color:#808080;letter-spacing:-0.428px;">config.yml</span>
 <svg style="left:160px;top:74px" width="11" height="11" viewBox="0 0 11 11"><rect width="11" height="11" fill="#a8a8a8"/><path d="M2.500 2.500L8.500 8.500M8.500 2.500L2.500 8.500" stroke="#dcdcdc" stroke-width="1.800"/></svg>
 <svg class="fl" style="left:180px;top:73px"><rect x=".5" y=".5" width="12" height="12" rx="1" fill="#9a78c6" stroke="#7a5aa8"/><rect x="2.500" y="1" width="8" height="4.500" fill="#b89ad6"/><rect x="2.500" y="8" width="8" height="3.500" fill="#a88fc9"/></svg>
 <span class="t" style="left:196.5px;top:74.77px;font-size:11.5px;line-height:11.5px;color:#808080;letter-spacing:-0.537px;">new 1</span>
 <svg style="left:229px;top:74px" width="11" height="11" viewBox="0 0 11 11"><rect width="11" height="11" fill="#a8a8a8"/><path d="M2.500 2.500L8.500 8.500M8.500 2.500L2.500 8.500" stroke="#dcdcdc" stroke-width="1.800"/></svg>
 <!-- editor frame -->
 <div id="edf"></div>
</div>

<div id="ed">
<div id="lnm"></div><div id="fdm"></div>
<div id="cur"></div>
<pre id="lnum">334
335
336
337
338
339
340
341
342
343
344
345
346
347
348
349
350
351
352
353
354
355
356
357
358
359
360</pre>
<pre id="src">    <b>size:</b> <span class="n">9</span>
    <b>items:</b>
      <b>&#x27;2&#x27;:</b>
        <b>material:</b> DIRT
        <b>data:</b> <span class="n">0</span>
        <b>amount:</b> <span class="n">1</span>
        <b>slot:</b> <span class="n">1</span>
        <b>priority:</b> <span class="n">1</span>
        <b>view_requirement:</b>
          <b>requirements:</b>
            <b>hasItem:</b>
              <b>type:</b> has item
              <b>material:</b> DIRT
              <b>data:</b> <span class="n">0</span>
              <b>amount:</b> <span class="n">1</span>
              <b>name:</b> §eDEPTRAI
              <b>lore:</b>
              - §eDEPTRAI
        <b>display_name:</b> &#x27;&amp;bTeleport home&#x27;
        <b>lore:</b>
        - &#x27;&amp;bClick to teleport&#x27;
        - &#x27;&amp;bto your home&#x27;
        <b>left_click_commands:</b>
        - &#x27;[close]&#x27;
        <b>right_click_commands:</b>
        - &#x27;[close]&#x27;
</pre>
<div class="ig" style="left:110px;top:38px;height:475px"></div>
<div class="ig" style="left:150px;top:171px;height:171px"></div>
<div class="ig" style="left:190px;top:209px;height:133px"></div>
<svg style="left:54px;top:0" width="15" height="525" viewBox="0 0 15 525" shape-rendering="crispEdges">
 <path d="M7.500 0V42" stroke="#808080" stroke-width="1"/>
 <path d="M7.500 42V484.500H13" fill="none" stroke="#f00" stroke-width="1"/>
 <path d="M7.500 332.500H13" stroke="#808080" stroke-width="1"/>
 <rect x="2.500" y="23.500" width="10" height="10" fill="#f4f4f4" stroke="#808080"/><path d="M4 28.500H11" stroke="#808080"/>
 <rect x="2.500" y="42.500" width="10" height="10" fill="#f4f4f4" stroke="#f00"/><path d="M4 47.500H11" stroke="#f00"/>
 <g><rect x="2.500" y="156.500" width="10" height="10" fill="#f4f4f4" stroke="#808080"/><path d="M7.500 156.500H2.500V166.500H7.500" fill="none" stroke="#f00"/><path d="M4 161.500H11" stroke="#808080"/></g>
 <g><rect x="2.500" y="175.500" width="10" height="10" fill="#f4f4f4" stroke="#808080"/><path d="M7.500 175.500H2.500V185.500H7.500" fill="none" stroke="#f00"/><path d="M4 180.500H11" stroke="#808080"/></g>
 <g><rect x="2.500" y="194.500" width="10" height="10" fill="#f4f4f4" stroke="#808080"/><path d="M7.500 194.500H2.500V204.500H7.500" fill="none" stroke="#f00"/><path d="M4 199.500H11" stroke="#808080"/></g>
</svg>

<!-- vertical scrollbar (rel to editor origin 624,131) -->
<div style="left:559px;top:0;width:17px;height:525px;background:#fff;border:1px solid #d2d2d2;border-right-color:#bcbcbc"></div>
<div style="left:559px;top:0;width:17px;height:17px;border:1px solid #d2d2d2;background:#fff"></div>
<svg style="left:563px;top:5px" width="9" height="6" viewBox="0 0 9 6"><path d="M.5 5.500L4.500 1.500 8.500 5.500" fill="none" stroke="#555" stroke-width="1.300"/></svg>
<div style="left:559px;top:471px;width:17px;height:37px;background:#dcdcdc;border:1px solid #b9b9b9"></div>
<div style="left:564px;top:485px;width:7px;height:1px;background:#555;box-shadow:0 2px 0 #555,0 4px 0 #555,0 6px 0 #555"></div>
<div style="left:559px;top:508px;width:17px;height:17px;border:1px solid #d2d2d2;background:#fff"></div>
<svg style="left:563px;top:514px" width="9" height="6" viewBox="0 0 9 6"><path d="M.5 .5L4.500 4.500 8.500 .5" fill="none" stroke="#555" stroke-width="1.300"/></svg>
<!-- horizontal scrollbar -->
<div style="left:0;top:525px;width:559px;height:17px;background:#fff;border:1px solid #d2d2d2"></div>
<div style="left:0;top:525px;width:17px;height:17px;border:1px solid #d2d2d2;background:#fff"></div>
<svg style="left:5px;top:529px" width="6" height="9" viewBox="0 0 6 9"><path d="M5.500 .5L1.500 4.500 5.500 8.500" fill="none" stroke="#555" stroke-width="1.300"/></svg>
<div style="left:17px;top:525px;width:173px;height:17px;background:#dcdcdc;border:1px solid #b9b9b9"></div>
<div style="left:100px;top:530px;width:1px;height:7px;background:#555;box-shadow:2px 0 0 #555,4px 0 0 #555"></div>
<div style="left:542px;top:525px;width:17px;height:17px;border:1px solid #d2d2d2;background:#fff"></div>
<svg style="left:548px;top:529px" width="6" height="9" viewBox="0 0 6 9"><path d="M.5 .5L4.500 4.500 .5 8.500" fill="none" stroke="#555" stroke-width="1.300"/></svg>
<div style="left:559px;top:525px;width:17px;height:17px;background:#f0f0f0"></div>

</div>
<!-- status bar: abs y 678-700, x 620-1204 -->
<div id="sb">
 <span class="t" style="left:2.6px;top:5.87px;font-size:11.5px;line-height:11.5px;color:#000;letter-spacing:0.083px;">length :</span>
 <i class="ss" style="left:43px"></i>
 <span class="t" style="left:48.3px;top:5.87px;font-size:11.5px;line-height:11.5px;color:#000;letter-spacing:-0.322px;">Ln : 353</span><span class="t" style="left:100.6px;top:5.87px;font-size:11.5px;line-height:11.5px;color:#000;letter-spacing:-0.180px;">Col : 14</span><span class="t" style="left:151.4px;top:5.87px;font-size:11.5px;line-height:11.5px;color:#000;letter-spacing:-0.326px;">Sel : 0 | 0</span>
 <i class="ss" style="left:303px"></i>
 <span class="t" style="left:309px;top:5.87px;font-size:11.5px;line-height:11.5px;color:#000;letter-spacing:-0.287px;">Unix (LF)</span>
 <i class="ss" style="left:412px"></i>
 <span class="t" style="left:417.5px;top:5.87px;font-size:11.5px;line-height:11.5px;color:#000;letter-spacing:-0.119px;">UTF-8</span>
 <i class="ss" style="left:533px"></i>
 <span class="t" style="left:538.2px;top:5.87px;font-size:11.5px;line-height:11.5px;color:#000;letter-spacing:-0.391px;">INS</span>
 <i class="ss" style="left:563px"></i>
 <svg style="left:574px;top:12px" width="9" height="9" viewBox="0 0 9 9"><path d="M7 1h1.500v1.500H7z M4 4h1.500v1.500H4z M7 4h1.500v1.500H7z M1 7h1.500v1.500H1z M4 7h1.500v1.500H4z M7 7h1.500v1.500H7z" fill="#b0b0b0"/></svg>
</div>

</div>
<div id="wm" style="left:0;top:0;width:1360px;height:768px;pointer-events:none">
<span class="t" style="left:969px;top:653.64px;font-size:18.5px;line-height:18.5px;color:rgba(100,100,100,.47);letter-spacing:0.688px;">Activate Windows</span>
<span class="t" style="left:969px;top:677.65px;font-size:14px;line-height:14px;color:rgba(100,100,100,.47);letter-spacing:0.348px;">Go to System in Control Panel to activate Windows.</span>
</div>
</div></body></html>
